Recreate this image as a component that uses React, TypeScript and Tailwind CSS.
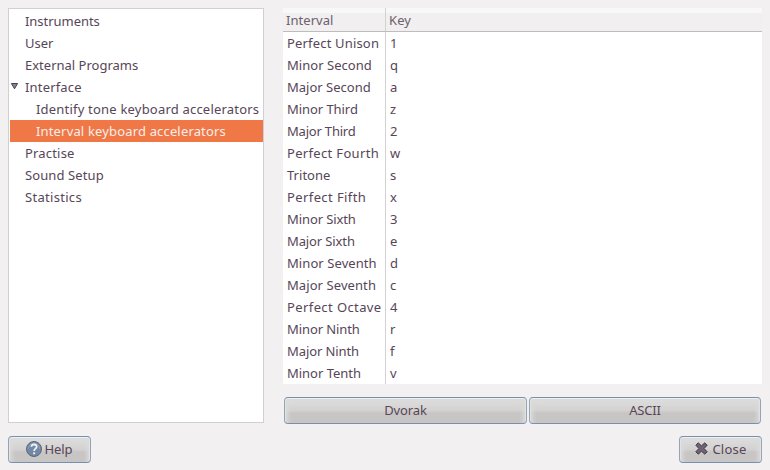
import type { ReactNode } from 'react';

type TreeItem = { label: string; level: number; track: string; open?: boolean; selected?: boolean };

const tree: TreeItem[] = [
  { label: 'Instruments', level: 0, track: 'tracking-[-0.04px]' },
  { label: 'User', level: 0, track: 'tracking-[-0.05px]' },
  { label: 'External Programs', level: 0, track: 'tracking-[0px]' },
  { label: 'Interface', level: 0, track: 'tracking-[0.17px]', open: true },
  { label: 'Identify tone keyboard accelerators', level: 1, track: 'tracking-[0.2px]' },
  { label: 'Interval keyboard accelerators', level: 1, track: 'tracking-[0.16px]', selected: true },
  { label: 'Practise', level: 0, track: 'tracking-[0.18px]' },
  { label: 'Sound Setup', level: 0, track: 'tracking-[0.1px]' },
  { label: 'Statistics', level: 0, track: 'tracking-[0.3px]' },
];

const intervals: [string, string, string][] = [
  ['Perfect Unison', '1', 'tracking-[0.17px]'],
  ['Minor Second', 'q', 'tracking-[0.04px]'],
  ['Major Second', 'a', 'tracking-[0px]'],
  ['Minor Third', 'z', 'tracking-[-0.06px]'],
  ['Major Third', '2', 'tracking-[-0.2px]'],
  ['Perfect Fourth', 'w', 'tracking-[0.33px]'],
  ['Tritone', 's', 'tracking-[0.03px]'],
  ['Perfect Fifth', 'x', 'tracking-[0.4px]'],
  ['Minor Sixth', '3', 'tracking-[-0.1px]'],
  ['Major Sixth', 'e', 'tracking-[-0.12px]'],
  ['Minor Seventh', 'd', 'tracking-[0.08px]'],
  ['Major Seventh', 'c', 'tracking-[0.08px]'],
  ['Perfect Octave', '4', 'tracking-[0.4px]'],
  ['Minor Ninth', 'r', 'tracking-[-0.1px]'],
  ['Major Ninth', 'f', 'tracking-[-0.1px]'],
  ['Minor Tenth', 'v', 'tracking-[-0.02px]'],
];

function Button({ className, children }: { className: string; children: ReactNode }) {
  return (
    <button
      className={
        'flex h-[27px] items-center justify-center rounded-[4px] border border-x-[#95a3b7] border-y-[#7890ad] bg-linear-to-b from-[#dfdede] via-[#d3d2d1] via-50% to-[#c8c6c4] to-60% shadow-[inset_0_1px_0_#f0f0f0,inset_1px_0_0_#e2e2e2,inset_-1px_0_0_#e2e2e2,inset_3px_4px_4px_#dbdbdb,inset_-3px_4px_4px_#dbdbdb] ' +
        className
      }
    >
      {children}
    </button>
  );
}

function HelpIcon() {
  return (
    <svg width="16" height="16" viewBox="0 0 16 16" fill="none">
      <circle cx="8" cy="8" r="7.5" fill="#7288a5" stroke="#566983" />
      <path d="M2.2 8a5.8 5.8 0 0 1 11.6 0" stroke="#91a1b7" />
      <path d="M5.4 5.8C5.4 2.7 10.7 2.7 10.7 5.8C10.7 7.7 8.1 7.6 8.1 10" stroke="#f1f2f4" strokeWidth="1.8" />
      <path d="M7.1 11.4h2v1.8h-2z" fill="#f1f2f4" />
    </svg>
  );
}

function CloseIcon() {
  return (
    <svg width="13" height="13" viewBox="0 0 13 13">
      <path
        d="M3.2.8 6.5 3.8 9.8.8l2.4 2.4-3.1 3.3 3.1 3.3-2.4 2.4-3.3-3-3.3 3L.8 9.8l3.1-3.3L.8 3.2z"
        fill="#65657a"
        stroke="#49394c"
        strokeLinejoin="round"
      />
      <path d="m3.3 3.3 6.4 6.4m0-6.4L3.3 9.7" stroke="#806066" strokeWidth="1" />
    </svg>
  );
}

export default function App() {
  return (
    <div className="flex h-[470px] w-[770px] flex-col overflow-hidden bg-[#f2f0f1] p-2 font-['Noto_Sans','Open_Sans',sans-serif] text-[13px] leading-[22px] whitespace-nowrap text-[#564658]">
      <div className="flex h-[416px] gap-[19px]">
        <nav className="h-[415px] w-[256px] border border-[#d0d0d0] bg-white pt-px pl-px">
          {tree.map((item) => (
            <div
              key={item.label}
              className={
                'flex h-[22px] ' +
                (item.selected ? 'bg-[#f07746] text-[#f8eeea] ' : '') +
                (item.level ? 'pl-[26px]' : '')
              }
            >
              {item.level === 0 && (
                <span className="w-[15px] pt-[6px]">
                  {item.open && (
                    <svg width="9" height="9" viewBox="0 0 9 9">
                      <path d="M1.4 1.5h6.2L4.5 6.8z" fill="#7e8692" stroke="#4c404f" />
                    </svg>
                  )}
                </span>
              )}
              <span className={item.track}>{item.label}</span>
            </div>
          ))}
        </nav>
        <main className="flex flex-col">
          <div className="flex h-[376px] w-[479px] flex-col bg-white">
            <div className="flex h-6 border-b border-[#bebcbd] bg-linear-to-b from-[#f7f9f8] from-[5px] to-[#f1eff0] to-[5px] text-[#6c616c]">
              <span className="w-[103px] border-r border-[#d3d2d3] pt-px pl-[3px] tracking-[0.04px]">Interval</span>
              <span className="pt-px pl-[3px] tracking-[0.1px]">Key</span>
            </div>
            {intervals.map(([name, key, track]) => (
              <div key={name} className="flex h-[22px]">
                <span className={'w-[103px] border-r border-[#d3d2d3] pl-1 ' + track}>{name}</span>
                <span className="pl-[4px]">{key}</span>
              </div>
            ))}
          </div>
          <div className="mt-[13px] ml-px flex gap-[2px]">
            <Button className="w-[243px] pb-px tracking-[-0.1px]">Dvorak</Button>
            <Button className="w-[232px] pb-px tracking-[-0.15px]">ASCII</Button>
          </div>
        </main>
      </div>
      <footer className="mt-[12px] flex justify-between">
        <Button className="w-[83px] gap-[2px] pb-[2px]">
          <HelpIcon />
          <span className="tracking-[-0.05px]">Help</span>
        </Button>
        <Button className="w-[83px] gap-[4px] pb-[2px] pl-px">
          <CloseIcon />
          <span className="tracking-[0.25px]">Close</span>
        </Button>
      </footer>
    </div>
  );
}
